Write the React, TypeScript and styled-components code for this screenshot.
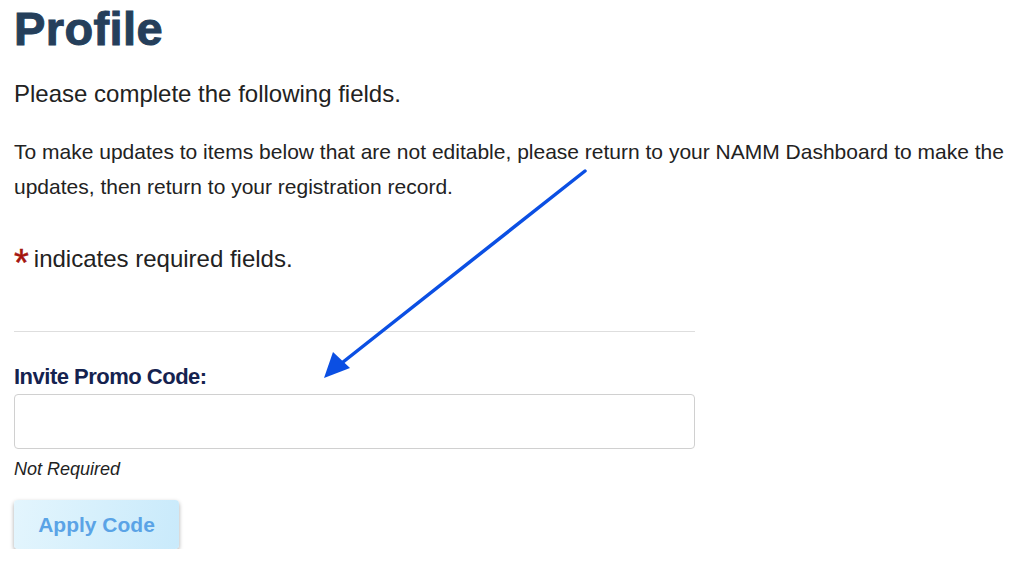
import styled, { createGlobalStyle } from 'styled-components';

const GlobalStyle = createGlobalStyle`
  body {
    margin: 0;
    background: #ffffff;
    font-family: "Liberation Sans", Arial, sans-serif;
    color: #222;
  }
`;

const Page = styled.main`
  position: relative;
  padding: 0 4px 0 14px;
  width: 1015px;
  box-sizing: border-box;
`;

const Title = styled.h1`
  margin: 0;
  padding-top: 4px;
  font-size: 47px;
  line-height: 50px;
  font-weight: 900;
  color: #253f5b;
  -webkit-text-stroke: 1px #253f5b;
  letter-spacing: 0.4px;
`;

const Lead = styled.p`
  margin: 26px 0 0;
  font-size: 24px;
  line-height: 28px;
  color: #222;
`;

const Note = styled.p`
  margin: 26px 0 0;
  font-size: 21px;
  line-height: 35px;
  color: #222;
`;

const Required = styled.p`
  margin: 37px 0 0;
  font-size: 24px;
  line-height: 28px;
  color: #222;
  display: flex;
  align-items: center;
  gap: 5px;
`;

const Star = styled.span`
  color: #a5150f;
  font-size: 38px;
  line-height: 28px;
  padding-top: 8px;
  -webkit-text-stroke: 0.5px #a5150f;
`;

const Form = styled.section`
  width: 681px;
`;

const Divider = styled.hr`
  margin: 54px 0 0;
  border: 0;
  border-top: 1px solid #dedede;
`;

const Label = styled.label`
  display: block;
  margin-top: 34px;
  font-size: 22px;
  font-weight: bold;
  color: #15224f;
  letter-spacing: -0.5px;
  line-height: 22px;
`;

const Input = styled.input`
  display: block;
  box-sizing: border-box;
  width: 681px;
  height: 55px;
  margin-top: 6px;
  border: 1px solid #d0d0d0;
  border-radius: 4px;
  font-size: 18px;
  padding: 0 12px;
`;

const Hint = styled.div`
  margin-top: 10px;
  font-size: 18px;
  font-style: italic;
  color: #222;
  line-height: 20px;
`;

const ApplyButton = styled.button`
  margin-top: 21px;
  width: 165px;
  height: 49px;
  border: 0;
  border-radius: 4px;
  background: linear-gradient(100deg, #e3f5fd 0%, #c9eafb 100%);
  box-shadow: 0 2px 4px rgba(0, 0, 0, 0.35);
  color: #5aa3e6;
  font-family: "Liberation Sans", Arial, sans-serif;
  font-size: 21px;
  font-weight: bold;
`;

const Arrow = styled.svg`
  position: absolute;
  left: 0;
  top: 0;
  pointer-events: none;
`;

export default function App() {
  return (
    <>
      <GlobalStyle />
      <Page>
        <Title>Profile</Title>
        <Lead>Please complete the following fields.</Lead>
        <Note>
          To make updates to items below that are not editable, please return to your NAMM Dashboard to make the
          updates, then return to your registration record.
        </Note>
        <Required>
          <Star>*</Star>
          <span>indicates required fields.</span>
        </Required>
        <Form>
          <Divider />
          <Label htmlFor="promo">Invite Promo Code:</Label>
          <Input id="promo" type="text" />
          <Hint>Not Required</Hint>
          <ApplyButton>Apply Code</ApplyButton>
        </Form>
        <Arrow width="1015" height="577" viewBox="0 0 1015 577">
          <line x1="585" y1="171" x2="338" y2="366" stroke="#0b4fe3" strokeWidth="3.5" strokeLinecap="round" />
          <polygon points="324,378 333,352 350,368" fill="#0b4fe3" />
        </Arrow>
      </Page>
    </>
  );
}
